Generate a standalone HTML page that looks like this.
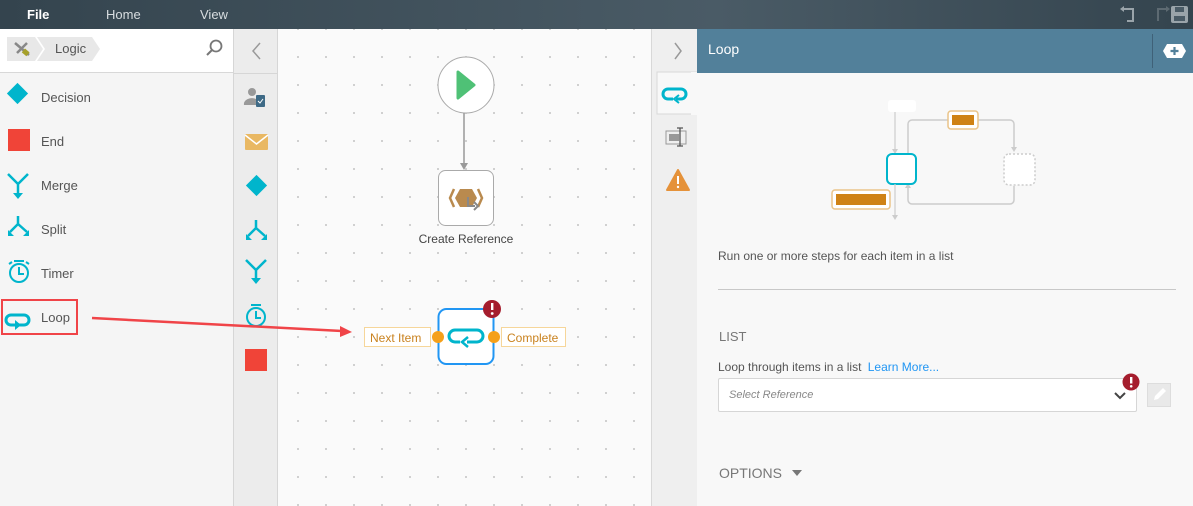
<!DOCTYPE html>
<html><head><meta charset="utf-8"><style>
*{margin:0;padding:0;box-sizing:border-box}
body{width:1193px;height:506px;overflow:hidden;font-family:"Liberation Sans",sans-serif;background:#f5f5f5;position:relative;font-size:13px;color:#555}
.abs{position:absolute}
#top{left:0;top:0;width:1193px;height:29px;background:linear-gradient(90deg,#34444e,#4a5b66 60%,#34444e)}
#top span{position:absolute;top:7px;color:#d8dde0;font-size:13px}
#left{left:0;top:29px;width:233px;height:477px;background:#f5f5f5}
#lhead{left:0;top:29px;width:233px;height:44px;background:#fff;border-bottom:1px solid #d8d8d8}
.item{position:absolute;left:41px;font-size:13px;color:#555}
#strip{left:233px;top:29px;width:45px;height:477px;background:#ececec;border-left:1px solid #d6d6d6;border-right:1px solid #d6d6d6}
#canvas{left:278px;top:29px;width:373px;height:477px;background-color:#fafafa;background-image:radial-gradient(circle,#c8c8c8 0.8px,transparent 1.2px);background-size:28px 28px;background-position:6px 14px}
#rstrip{left:651px;top:29px;width:47px;height:477px;background:#efefef;border-left:1px solid #d8d8d8}
#rpanel{left:697px;top:29px;width:496px;height:477px;background:#f8f8f8}
#rhead{left:697px;top:29px;width:496px;height:44px;background:#52809a}
</style></head><body>
<div id="top" class="abs"><span style="left:27px;color:#fff;font-weight:bold">File</span><span style="left:106px">Home</span><span style="left:200px">View</span>
<svg class="abs" style="left:1118px;top:5px" width="72" height="20"><path d="M5 4h10v12h-6" fill="none" stroke="#9aa4aa" stroke-width="2"/><path d="M2 4l4-3v6z" fill="#9aa4aa"/><path d="M40 16V4h8" fill="none" stroke="#5d6a72" stroke-width="2"/><path d="M52 4l-4-3v6z" fill="#5d6a72"/><rect x="53" y="1" width="17" height="17" rx="2" fill="#9aa4aa"/><rect x="57" y="2" width="9" height="5" fill="#4a5b66"/><rect x="56" y="11" width="11" height="5" fill="#4a5b66"/></svg>
</div>
<div id="left" class="abs"></div>
<div id="lhead" class="abs">
<svg class="abs" style="left:7px;top:8px" width="95" height="24"><path d="M0 0h28l8 12-8 12H0z" fill="#e8e8e8"/><path d="M30 0h55l8 12-8 12H30l8-12z" fill="#e8e8e8"/><path d="M8 6l14 12M20 6l-10 10" stroke="#888" stroke-width="2.5"/><rect x="16" y="13" width="6" height="5" fill="#a6a02a" transform="rotate(40 19 15)"/></svg>
<span class="abs" style="left:55px;top:12px;font-size:13px;color:#555">Logic</span>
<svg class="abs" style="left:206px;top:10px" width="18" height="18"><circle cx="10" cy="7" r="5.5" fill="none" stroke="#777" stroke-width="1.8"/><path d="M6 11l-5 5" stroke="#777" stroke-width="2"/></svg>
</div>
<svg class="abs" style="left:0;top:80px" width="233" height="260">
<rect x="10" y="6" width="15" height="15" fill="#00b5cc" transform="rotate(45 17.5 13.5)"/>
<rect x="8" y="49" width="22" height="22" fill="#f04438"/>
<g stroke="#00b5cc" stroke-width="2.5" fill="none"><path d="M8 94l10 10M28 94l-10 10v10"/></g><path d="M13 113h10l-5 6z" fill="#00b5cc"/>
<g stroke="#00b5cc" stroke-width="2.5" fill="none"><path d="M18 136v8l-8 8M18 144l9 8"/></g><path d="M8 150v6h6zM29 150v6h-6z" fill="#00b5cc"/>
<g stroke="#00b5cc" stroke-width="2" fill="none"><circle cx="19" cy="193" r="9"/><path d="M19 187v7h5M14 181h10M9 184l3-2M29 184l-3-2"/></g>
<g stroke="#00b5cc" stroke-width="3" fill="none"><path d="M16 245h-5a5 5 0 0 1 0-10h13a5 5 0 0 1 0 10h-6"/></g><path d="M15 240l6 5-6 5z" fill="#00b5cc"/>
</svg>
<span class="item" style="top:90px">Decision</span><span class="item" style="top:134px">End</span><span class="item" style="top:178px">Merge</span><span class="item" style="top:222px">Split</span><span class="item" style="top:266px">Timer</span><span class="item" style="top:310px">Loop</span>
<div class="abs" style="left:1px;top:299px;width:77px;height:36px;border:2px solid #f04448"></div>
<div id="strip" class="abs"></div>
<div class="abs" style="left:234px;top:73px;width:43px;height:1px;background:#d6d6d6"></div>
<svg class="abs" style="left:234px;top:29px" width="44" height="350">
<path d="M26 14l-7 8 7 8" fill="none" stroke="#999" stroke-width="1.5"/>
<circle cx="18" cy="63" r="4" fill="#999"/><path d="M10 76a8 6 0 0 1 12-6v6z" fill="#999"/><rect x="22" y="66" width="9" height="12" rx="1" fill="#3e6a86"/><path d="M24 72l2 2 3-4" stroke="#fff" fill="none"/>
<rect x="11" y="105" width="23" height="16" rx="1" fill="#e9b863"/><path d="M11 106l11.5 9 11.5-9" stroke="#fff" stroke-width="1.5" fill="none"/>
<rect x="15" y="149" width="15" height="15" fill="#00b5cc" transform="rotate(45 22.5 156.5)"/>
<g stroke="#00b5cc" stroke-width="2.5" fill="none"><path d="M22 191v8l-8 8M22 199l9 8"/><path d="M12 231l10 10M32 231l-10 10v9"/><circle cx="22" cy="288" r="9" stroke-width="2"/><path d="M22 282v7h5M17 276h10" stroke-width="2"/></g><path d="M12 205v6h6zM33 205v6h-6zM17 249h10l-5 6z" fill="#00b5cc"/>
<rect x="11" y="320" width="22" height="22" fill="#f04438"/>
</svg>
<div id="canvas" class="abs"></div>
<svg class="abs" style="left:278px;top:29px" width="373" height="477">
<circle cx="188" cy="56" r="28" fill="#fff" stroke="#aaa"/><path d="M180 43l16 13-16 13z" fill="#4fc176" stroke="#4fc176" stroke-width="3" stroke-linejoin="round"/>
<path d="M186 84v54" stroke="#999" stroke-width="1.5"/><path d="M182 134h8l-4 7z" fill="#999"/>
<rect x="160.5" y="141.5" width="55" height="55" rx="7" fill="#fff" stroke="#aaa"/>
<path d="M182 160h12l5 9-5 9h-12l-5-9z" fill="#b98a4e"/><path d="M176 160l-4 9 4 9M200 160l4 9-4 9" stroke="#b98a4e" stroke-width="2.5" fill="none"/><path d="M190 168v9h7" stroke="#888" stroke-width="2" fill="none"/><path d="M196 173l4 4-4 4" stroke="#888" stroke-width="2" fill="none"/>
<text x="188" y="214" font-size="12" fill="#444" text-anchor="middle" font-family="Liberation Sans">Create Reference</text>
<rect x="160.5" y="280" width="55" height="55" rx="8" fill="#fff" stroke="#2196f3" stroke-width="2"/>
<path d="M182 313h-5a6 6 0 0 1 0-12h22a6 6 0 0 1 0 12h-10" stroke="#00b5cc" stroke-width="3" fill="none"/><path d="M190 308l-6 5 6 5" stroke="#00b5cc" stroke-width="2.5" fill="none"/>
<circle cx="214" cy="280" r="9" fill="#a51d2d"/><rect x="213" y="274" width="2.4" height="7" fill="#fff"/><circle cx="214.2" cy="284.5" r="1.4" fill="#fff"/>
<circle cx="160" cy="308" r="6" fill="#f5a01a"/><circle cx="216" cy="308" r="6" fill="#f5a01a"/>
<rect x="86.5" y="298.5" width="66" height="19" fill="#fff" stroke="#f6d69a"/><text x="92" y="313" font-size="12" fill="#c9821f" font-family="Liberation Sans">Next Item</text>
<rect x="223.5" y="298.5" width="64" height="19" fill="#fff" stroke="#f6d69a"/><text x="229" y="313" font-size="12" fill="#c9821f" font-family="Liberation Sans">Complete</text>
</svg>
<svg class="abs" style="left:0;top:0" width="1193" height="506" pointer-events="none"><path d="M92 318L342 331" stroke="#f04448" stroke-width="2.5"/><path d="M352 332l-12-6v11z" fill="#f04448"/></svg>
<div id="rstrip" class="abs"></div>
<svg class="abs" style="left:651px;top:29px" width="47" height="180">
<path d="M24 14l6 8-6 8" fill="none" stroke="#999" stroke-width="1.5"/>
<rect x="6" y="43" width="41" height="42" fill="#f8f8f8" stroke="#d8d8d8"/><rect x="40" y="43" width="8" height="43" fill="#f8f8f8"/>
<path d="M22 70h-5a5 5 0 0 1 0-10h13a5 5 0 0 1 0 10h-5" stroke="#00b5cc" stroke-width="3" fill="none"/><path d="M28 66l-5 4 5 4" stroke="#00b5cc" stroke-width="2" fill="none"/>
<rect x="15" y="102" width="20" height="13" fill="none" stroke="#999"/><rect x="18" y="105" width="10" height="7" fill="#999"/><path d="M29 99v18M26 99h6M26 117h6" stroke="#555" stroke-width="1.3"/>
<path d="M27 141l11 20h-22z" fill="#e5923a" stroke="#e5923a" stroke-width="2" stroke-linejoin="round"/><rect x="26" y="147" width="2" height="8" fill="#fff"/><circle cx="27" cy="158" r="1.2" fill="#fff"/>
</svg>
<div id="rpanel" class="abs"></div>
<div id="rhead" class="abs"><span class="abs" style="left:11px;top:12px;color:#fff;font-size:14px">Loop</span><div class="abs" style="left:455px;top:5px;width:1px;height:34px;background:#3f6178"></div><svg class="abs" style="left:465px;top:14px" width="25" height="16"><path d="M5 1h15l4 7-4 7H5L1 8z" fill="#fff"/><path d="M12.5 4v8M8.5 8h8" stroke="#52809a" stroke-width="2.2"/></svg></div>
<svg class="abs" style="left:697px;top:73px" width="496" height="160">
<rect x="191" y="27" width="28" height="12" rx="3" fill="#fff"/>
<path d="M198 39v40" stroke="#ccc" stroke-width="1.2"/><path d="M195 76h6l-3 5z" fill="#ccc"/>
<path d="M211 81v-30a4 4 0 0 1 4-4h98a4 4 0 0 1 4 4v24" stroke="#ccc" stroke-width="1.5" fill="none"/><path d="M314 74h6l-3 5z" fill="#ccc"/>
<path d="M317 113v14a4 4 0 0 1-4 4h-98a4 4 0 0 1-4-4v-14" stroke="#ccc" stroke-width="1.5" fill="none"/><path d="M208 115h6l-3-5z" fill="#ccc"/>
<rect x="190" y="81" width="29" height="30" rx="5" fill="#fff" stroke="#00b5cc" stroke-width="2"/>
<rect x="307" y="81" width="31" height="31" rx="5" fill="#fff" stroke="#ccc" stroke-width="1.5" stroke-dasharray="2 2"/>
<path d="M198 111v34" stroke="#ccc" stroke-width="1.2"/><path d="M195 142h6l-3 5z" fill="#ccc"/>
<rect x="251" y="38" width="30" height="18" rx="3" fill="#fff" stroke="#eac489" stroke-width="1.5"/><rect x="255" y="42" width="22" height="10" fill="#cf8215"/>
<rect x="135" y="117" width="58" height="19" rx="3" fill="#fff" stroke="#eac489" stroke-width="1.5"/><rect x="139" y="121" width="50" height="11" fill="#cf8215"/>
</svg>
<span class="abs" style="left:718px;top:249px;font-size:12px;color:#555">Run one or more steps for each item in a list</span>
<div class="abs" style="left:718px;top:289px;width:458px;height:1px;background:#c8c8c8"></div>
<span class="abs" style="left:719px;top:329px;font-size:13px;color:#777">LIST</span>
<span class="abs" style="left:718px;top:360px;font-size:12px;color:#555">Loop through items in a list <span style="color:#2196f3;margin-left:3px">Learn More...</span></span>
<div class="abs" style="left:718px;top:378px;width:419px;height:34px;background:#fff;border:1px solid #d6d6d6;border-radius:2px"><span class="abs" style="left:10px;top:10px;font-size:11px;font-style:italic;color:#888">Select Reference</span><svg class="abs" style="left:394px;top:12px" width="14" height="10"><path d="M2 2l5 5 5-5" stroke="#444" stroke-width="2" fill="none"/></svg></div>
<svg class="abs" style="left:1121px;top:373px" width="20" height="20"><circle cx="10" cy="9" r="8.5" fill="#a51d2d"/><rect x="9" y="4" width="2.4" height="6.5" fill="#fff"/><circle cx="10.2" cy="13.3" r="1.3" fill="#fff"/></svg>
<div class="abs" style="left:1147px;top:383px;width:24px;height:24px;background:#e9e9e9;border:1px solid #ddd"><svg width="22" height="22"><path d="M6 16l1-4 8-8 3 3-8 8z" fill="#fff"/></svg></div>
<span class="abs" style="left:719px;top:465px;font-size:14px;color:#777">OPTIONS</span>
<svg class="abs" style="left:791px;top:468px" width="12" height="10"><path d="M1 2h10l-5 6z" fill="#777"/></svg>
</body></html>
